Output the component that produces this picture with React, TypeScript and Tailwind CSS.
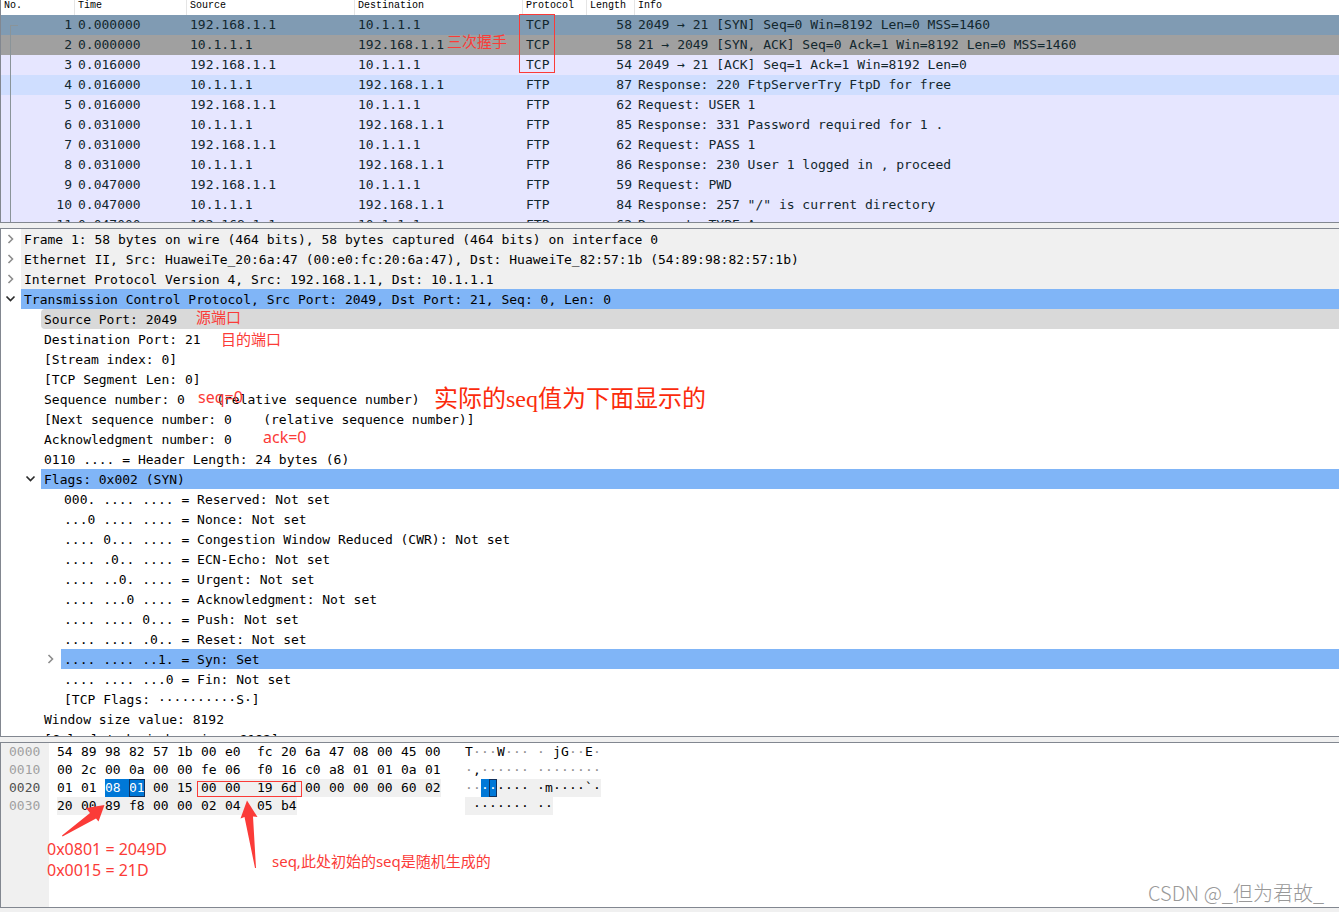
import { Fragment, type ReactNode } from 'react';

const MONO = "font-['DejaVu_Sans_Mono',monospace]";
const NOTE = "absolute whitespace-nowrap font-['Noto_Sans','Noto_Sans_CJK_SC',sans-serif] text-[#fb3b38]";

type Packet = [number, string, string, string, string, number, string];

const A = '192.168.1.1';
const B = '10.1.1.1';

const packets: Packet[] = [
  [1, '0.000000', A, B, 'TCP', 58, '2049 → 21 [SYN] Seq=0 Win=8192 Len=0 MSS=1460'],
  [2, '0.000000', B, A, 'TCP', 58, '21 → 2049 [SYN, ACK] Seq=0 Ack=1 Win=8192 Len=0 MSS=1460'],
  [3, '0.016000', A, B, 'TCP', 54, '2049 → 21 [ACK] Seq=1 Ack=1 Win=8192 Len=0'],
  [4, '0.016000', B, A, 'FTP', 87, 'Response: 220 FtpServerTry FtpD for free'],
  [5, '0.016000', A, B, 'FTP', 62, 'Request: USER 1'],
  [6, '0.031000', B, A, 'FTP', 85, 'Response: 331 Password required for 1 .'],
  [7, '0.031000', A, B, 'FTP', 62, 'Request: PASS 1'],
  [8, '0.031000', B, A, 'FTP', 86, 'Response: 230 User 1 logged in , proceed'],
  [9, '0.047000', A, B, 'FTP', 59, 'Request: PWD'],
  [10, '0.047000', B, A, 'FTP', 84, 'Response: 257 "/" is current directory'],
  [11, '0.047000', A, B, 'FTP', 62, 'Request: TYPE A'],
];

const rowColor: Record<number, string> = {
  1: 'bg-[#809bb3]',
  2: 'bg-[#a0a0a0]',
  4: 'bg-[#cfdeff]',
};

function PacketList() {
  const heads = ['No.', 'Time', 'Source', 'Destination', 'Protocol', 'Length', 'Info'];
  return (
    <section className="relative min-h-0 overflow-hidden border-b border-l border-[#828790] bg-[#e6e6ff]">
      <table className="w-full table-fixed border-separate border-spacing-0">
        <colgroup>
          <col className="w-[74px]" />
          <col className="w-[112px]" />
          <col className="w-[168px]" />
          <col className="w-[168px]" />
          <col className="w-[64px]" />
          <col className="w-[48px]" />
          <col />
        </colgroup>
        <thead>
          <tr className="h-[15px] bg-white text-left font-['Liberation_Mono',monospace] text-[10px] leading-[12px] text-black">
            {heads.map((h) => (
              <th key={h} className="border-r border-[#e5e5e5] p-0 pb-[3px] pl-[3px] font-normal last:border-r-0">
                {h}
              </th>
            ))}
          </tr>
        </thead>
        <tbody className={`${MONO} text-[13px] leading-[20px] text-[#12272e]`}>
          {packets.map(([no, time, src, dst, proto, len, info]) => (
            <tr key={no} className={`h-5 whitespace-pre ${rowColor[no] ?? ''}`}>
              <td className="p-0 pr-[3px] text-right">{no}</td>
              <td className="p-0 pl-[3px]">{time}</td>
              <td className="p-0 pl-[3px]">{src}</td>
              <td className="p-0 pl-[3px]">{dst}</td>
              <td className="p-0 pl-[3px]">{proto}</td>
              <td className="p-0 pr-[3px] text-right">{len}</td>
              <td className="p-0 pl-[3px]">{info}</td>
            </tr>
          ))}
        </tbody>
      </table>
      <div className="absolute top-[25px] bottom-0 left-[9px] w-2 border-l border-[#8a9499]" />
      <div className="absolute top-[25px] left-[9px] h-px w-2 bg-[#8a9499]" />
      <div className="absolute top-[14px] left-[518px] h-[59px] w-[36px] border border-[#fb3b38]" />
      <span className={`${NOTE} top-[31px] left-[446px] text-[15px] leading-[20px]`}>三次握手</span>
    </section>
  );
}

type Node = {
  level: 0 | 1 | 2;
  text: string;
  fold?: 'open' | 'closed';
  tone?: string;
  note?: ReactNode;
};

const nodes: Node[] = [
  { level: 0, fold: 'closed', tone: 'bg-[#f0f0f0]', text: 'Frame 1: 58 bytes on wire (464 bits), 58 bytes captured (464 bits) on interface 0' },
  { level: 0, fold: 'closed', tone: 'bg-[#f0f0f0]', text: 'Ethernet II, Src: HuaweiTe_20:6a:47 (00:e0:fc:20:6a:47), Dst: HuaweiTe_82:57:1b (54:89:98:82:57:1b)' },
  { level: 0, fold: 'closed', tone: 'bg-[#f0f0f0]', text: 'Internet Protocol Version 4, Src: 192.168.1.1, Dst: 10.1.1.1' },
  { level: 0, fold: 'open', tone: 'bg-[#80b5f7]', text: 'Transmission Control Protocol, Src Port: 2049, Dst Port: 21, Seq: 0, Len: 0' },
  {
    level: 1,
    tone: 'bg-[#d9d9d9] rounded-l-sm',
    text: 'Source Port: 2049',
    note: <span className={`${NOTE} -top-0.5 left-[195px] text-[15px] leading-[20px]`}>源端口</span>,
  },
  {
    level: 1,
    text: 'Destination Port: 21',
    note: <span className={`${NOTE} top-0 left-[220px] text-[15px] leading-[20px]`}>目的端口</span>,
  },
  { level: 1, text: '[Stream index: 0]' },
  { level: 1, text: '[TCP Segment Len: 0]' },
  {
    level: 1,
    text: 'Sequence number: 0    (relative sequence number)',
    note: (
      <>
        <span className={`${NOTE} -top-0.5 left-[197px] text-[16px] leading-[20px]`}>seq=0</span>
        <span className="absolute top-0 left-[433px] font-['Liberation_Serif','Noto_Sans_CJK_SC',serif] text-[24px] leading-[20px] whitespace-nowrap text-[#fb2b0c]">
          实际的seq值为下面显示的
        </span>
      </>
    ),
  },
  { level: 1, text: '[Next sequence number: 0    (relative sequence number)]' },
  {
    level: 1,
    text: 'Acknowledgment number: 0',
    note: <span className={`${NOTE} -top-0.5 left-[262px] text-[16px] leading-[20px]`}>ack=0</span>,
  },
  { level: 1, text: '0110 .... = Header Length: 24 bytes (6)' },
  { level: 1, fold: 'open', tone: 'bg-[#80b5f7]', text: 'Flags: 0x002 (SYN)' },
  { level: 2, text: '000. .... .... = Reserved: Not set' },
  { level: 2, text: '...0 .... .... = Nonce: Not set' },
  { level: 2, text: '.... 0... .... = Congestion Window Reduced (CWR): Not set' },
  { level: 2, text: '.... .0.. .... = ECN-Echo: Not set' },
  { level: 2, text: '.... ..0. .... = Urgent: Not set' },
  { level: 2, text: '.... ...0 .... = Acknowledgment: Not set' },
  { level: 2, text: '.... .... 0... = Push: Not set' },
  { level: 2, text: '.... .... .0.. = Reset: Not set' },
  { level: 2, fold: 'closed', tone: 'bg-[#80b5f7]', text: '.... .... ..1. = Syn: Set' },
  { level: 2, text: '.... .... ...0 = Fin: Not set' },
  { level: 2, text: '[TCP Flags: ··········S·]' },
  { level: 1, text: 'Window size value: 8192' },
  { level: 1, text: '[Calculated window size: 8192]' },
];

const indent = { 0: 'pl-0', 1: 'pl-5', 2: 'pl-10' };

function Chevron({ fold }: { fold: 'open' | 'closed' }) {
  return fold === 'open' ? (
    <svg viewBox="0 0 20 20" className="size-5" fill="none" stroke="#2b2b2b" strokeWidth="1.7">
      <path d="M5.5 7.5 9.5 11.5 13.5 7.5" />
    </svg>
  ) : (
    <svg viewBox="0 0 20 20" className="size-5" fill="none" stroke="#8c8c8c" strokeWidth="1.6">
      <path d="M7.5 6 11.5 10 7.5 14" />
    </svg>
  );
}

function DetailTree() {
  return (
    <section className="min-h-0 overflow-hidden border-y border-l border-[#828790] bg-white">
      <ul className={`${MONO} text-[13px] leading-[21px] text-black`}>
        {nodes.map((n, i) => (
          <li key={i} className={`relative flex h-5 ${indent[n.level]}`}>
            {n.fold ? (
              <button type="button" aria-label="Toggle" aria-expanded={n.fold === 'open'} className="size-5 shrink-0">
                <Chevron fold={n.fold} />
              </button>
            ) : (
              <span className="size-5 shrink-0" />
            )}
            <span className={`flex-1 pl-[3px] whitespace-pre ${n.tone ?? ''}`}>{n.text}</span>
            {n.note}
          </li>
        ))}
      </ul>
    </section>
  );
}

const dump = [
  { bytes: '54 89 98 82 57 1b 00 e0 fc 20 6a 47 08 00 45 00', ascii: 'T···W···· jG··E·' },
  { bytes: '00 2c 00 0a 00 00 fe 06 f0 16 c0 a8 01 01 0a 01', ascii: '·,··············' },
  { bytes: '01 01 08 01 00 15 00 00 19 6d 00 00 00 00 60 02', ascii: '·········m····`·' },
  { bytes: '20 00 89 f8 00 00 02 04 05 b4', ascii: ' ·········' },
];

const inSegment = (pos: number) => pos >= 34;

function byteTone(pos: number) {
  if (pos === 34) return 'bg-[#0078d7] text-white';
  if (pos === 35) return 'bg-[#0078d7] text-white outline-1 -outline-offset-1 outline-[#10305c]';
  return inSegment(pos) ? 'bg-[#f0f0f0]' : '';
}

function gapTone(pos: number) {
  if (pos === 34) return 'bg-[#0078d7]';
  return inSegment(pos) ? 'bg-[#f0f0f0]' : '';
}

function HexView() {
  return (
    <section className="relative min-h-0 overflow-hidden border-y border-l border-[#828790] bg-white">
      <div className={`${MONO} flex h-full text-[13px] leading-[18px] text-black`}>
        <div className="w-12 shrink-0 bg-[#f0f0f0] pl-2 text-[#a0a0a0]">
          <div>0000</div>
          <div>0010</div>
          <div className="text-[#505050]">0020</div>
          <div>0030</div>
        </div>
        <div className="w-[416px] shrink-0 pl-2">
          {dump.map((line, r) => (
            <div key={r} className="flex">
              {line.bytes.split(' ').map((b, c, all) => {
                const pos = r * 16 + c;
                return (
                  <Fragment key={c}>
                    <span className={`w-4 ${byteTone(pos)}`}>{b}</span>
                    {c < all.length - 1 && <span className={`${c === 7 ? 'w-4' : 'w-2'} ${gapTone(pos)}`} />}
                  </Fragment>
                );
              })}
            </div>
          ))}
        </div>
        <div className="whitespace-pre">
          {dump.map((line, r) => (
            <div key={r} className="flex">
              {line.ascii.split('').map((ch, c) => {
                const pos = r * 16 + c;
                const dim = ch === '·' && !inSegment(pos) ? 'text-[#909090]' : '';
                return (
                  <Fragment key={c}>
                    <span className={`w-2 ${dim} ${byteTone(pos)}`}>{ch}</span>
                    {c === 7 && <span className={`w-2 ${gapTone(pos)}`} />}
                  </Fragment>
                );
              })}
            </div>
          ))}
        </div>
      </div>

      <div className="absolute top-[38px] left-[196px] h-4 w-[105px] border border-[#fb3b38]" />
      <svg className="absolute top-[57px] left-[59px] h-10 w-12" viewBox="0 0 48 40" fill="#fb3b38">
        <path d="M44.500 5 26 8 30 13 2 35.500 2.500 36.500 36 18.500 38.500 21.500Z" />
      </svg>
      <svg className="absolute top-[55px] left-[238px] h-[72px] w-6" viewBox="0 0 24 72" fill="#fb3b38">
        <path d="M8 2.500 1.500 20.500 5.500 19 16 70 17 70 14 18.500 18.500 19Z" />
      </svg>
      <div className={`${NOTE} top-[96px] left-[46px] text-[16px] leading-[21px]`}>
        <div>0x0801 = 2049D</div>
        <div>0x0015 = 21D</div>
      </div>
      <span className={`${NOTE} top-[108px] left-[271px] text-[15px] leading-[20px]`}>seq,此处初始的seq是随机生成的</span>
      <span className="absolute right-[15px] bottom-0 font-['Noto_Sans_CJK_SC',sans-serif] text-[20px] leading-[28px] font-light text-[#999999]">
        CSDN @_但为君故_
      </span>
    </section>
  );
}

export default function App() {
  return (
    <main className="grid h-screen grid-rows-[223fr_509fr_166fr] gap-[5px] overflow-hidden bg-[#f0f0f0] pb-1">
      <PacketList />
      <DetailTree />
      <HexView />
    </main>
  );
}
